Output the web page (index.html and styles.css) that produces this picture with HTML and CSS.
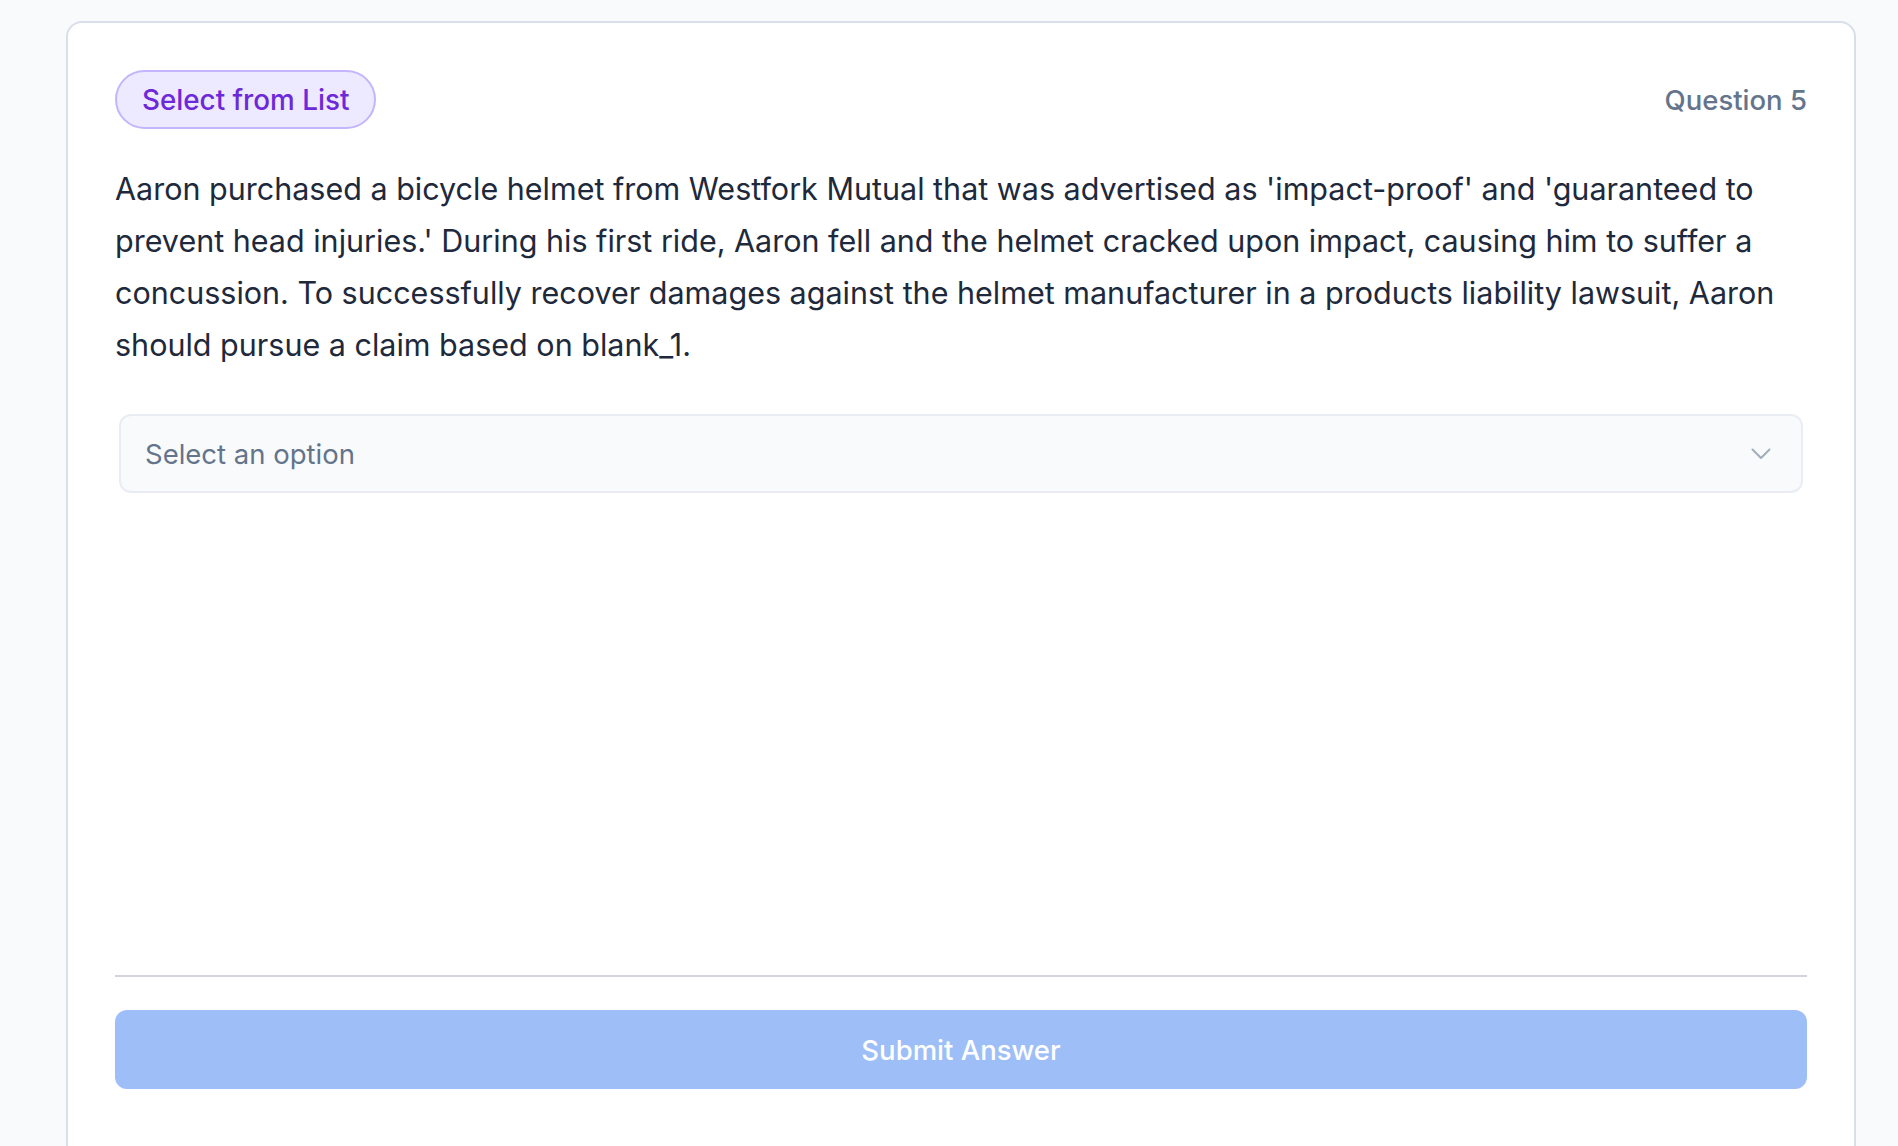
FILE: index.html
```html
<!DOCTYPE html>
<html lang="en">
<head>
<meta charset="utf-8">
<title>Question 5</title>
<link rel="stylesheet" href="styles.css">
</head>
<body>
<main class="card">
  <div class="content">
    <div class="header">
      <span class="badge">Select from List</span>
      <span class="qnum">Question 5</span>
    </div>
    <p class="prompt">Aaron purchased a bicycle helmet from Westfork Mutual that was advertised as 'impact-proof' and 'guaranteed to prevent head injuries.' During his first ride, Aaron fell and the helmet cracked upon impact, causing him to suffer a concussion. To successfully recover damages against the helmet manufacturer in a products liability lawsuit, Aaron should pursue a claim based on blank_1.</p>
    <div class="select">
      <span class="placeholder">Select an option</span>
      <svg class="chevron" width="20" height="12" viewBox="0 0 20 12" aria-hidden="true"><polyline points="1.5,1.5 10,10 18.5,1.5" fill="none" stroke="#a3adbb" stroke-width="2" stroke-linecap="round" stroke-linejoin="round"/></svg>
    </div>
  </div>
  <div class="footer">
    <button class="submit" type="button" disabled>Submit Answer</button>
  </div>
</main>
</body>
</html>
```

FILE: styles.css
```css
html, body {
  margin: 0;
  padding: 0;
}
body {
  background: #f8fafc;
  font-family: Inter, "Noto Sans", "Liberation Sans", sans-serif;
  color: #1e293b;
  overflow: hidden;
}
.card {
  box-sizing: border-box;
  margin: 21px 42px 0 66px;
  min-height: 1142px;
  background: #ffffff;
  border: 2px solid #d8dfe8;
  border-radius: 16px;
  padding: 47px 47px 72px 47px;
  display: flex;
  flex-direction: column;
}
.content {
  flex: 1;
}
.header {
  display: flex;
  align-items: center;
  justify-content: space-between;
}
.badge {
  box-sizing: border-box;
  height: 59px;
  display: inline-flex;
  align-items: center;
  padding: 0 25px;
  border-radius: 30px;
  background: #ede9fe;
  border: 2px solid #c4b5fd;
  color: #6d28d9;
  font-size: 27.8px;
  font-weight: 500;
}
.qnum {
  color: #64748b;
  font-size: 27.5px;
  font-weight: 500;
}
.prompt {
  margin: 34px 0 0 0;
  font-size: 30.5px;
  line-height: 52px;
  color: #1e293b;
}
.select {
  box-sizing: border-box;
  margin: 43px 4px 0 4px;
  height: 79px;
  background: #f8fafc;
  border: 2px solid #e9edf3;
  border-radius: 12px;
  display: flex;
  align-items: center;
  justify-content: space-between;
  padding: 0 30px 0 24px;
}
.placeholder {
  font-size: 27.5px;
  color: #64748b;
}
.chevron {
  display: block;
}
.footer {
  border-top: 2px solid #d1d5db;
  padding-top: 33px;
}
.submit {
  display: block;
  width: 100%;
  height: 79px;
  border: none;
  border-radius: 12px;
  background: #9ebef7;
  color: #ffffff;
  font-family: inherit;
  font-size: 27.5px;
  font-weight: 500;
}
```
